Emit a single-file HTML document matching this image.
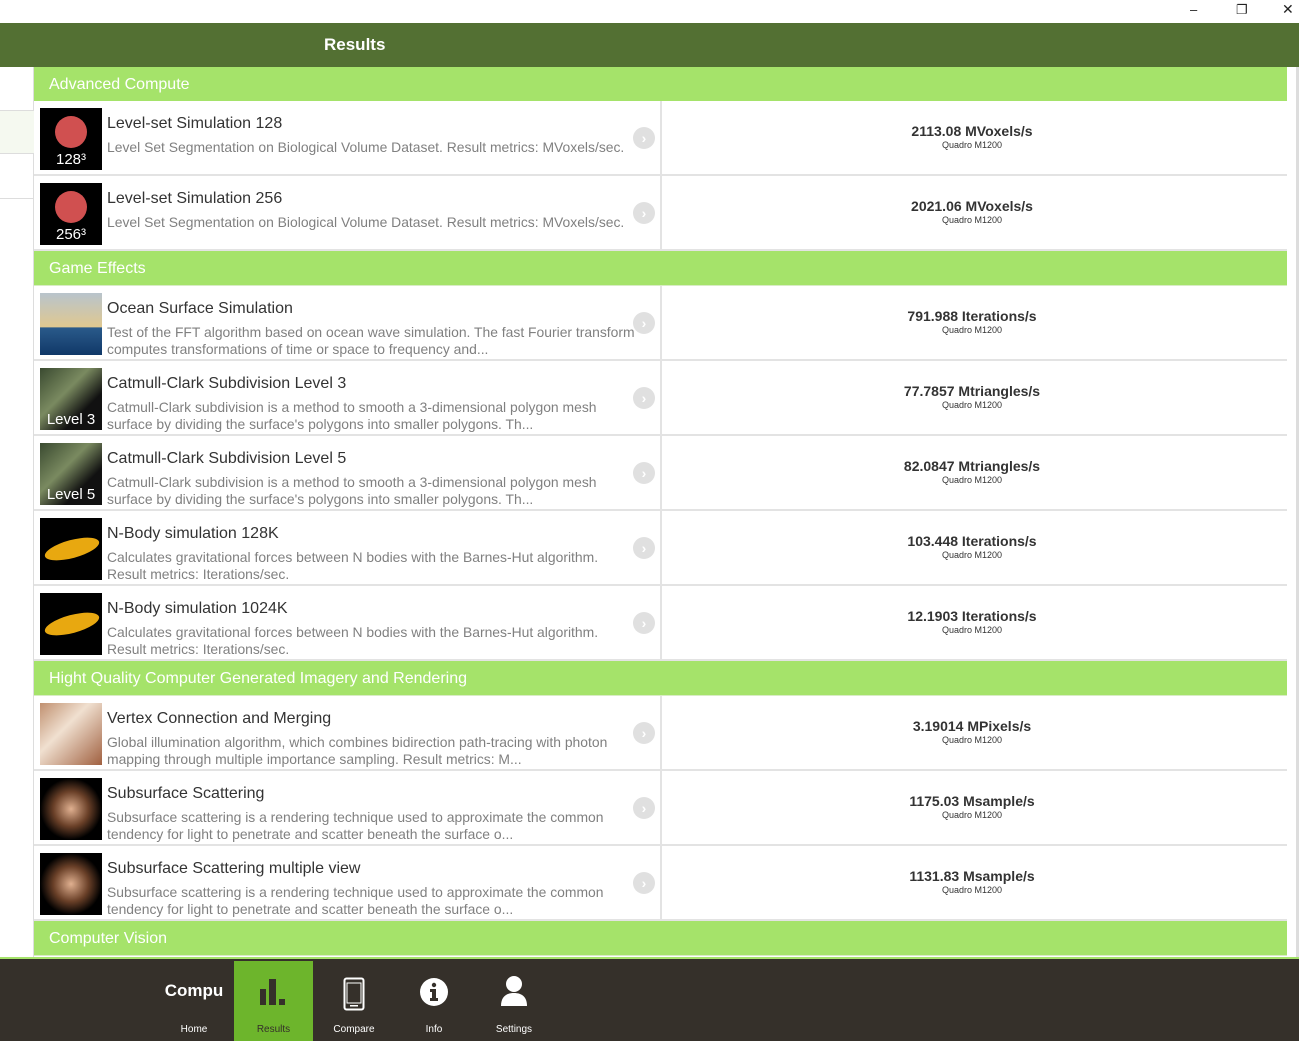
<!DOCTYPE html>
<html><head><meta charset="utf-8"><style>
*{margin:0;padding:0;box-sizing:border-box}
body{width:1299px;height:1041px;overflow:hidden;background:#fff;font-family:"Liberation Sans",sans-serif;position:relative}
.abs{position:absolute}
.hdr{left:0;top:23px;width:1299px;height:44px;background:#537033;color:#fff;font-weight:bold;font-size:17px;line-height:44px}
.sec{left:34px;width:1253px;height:35px;background:#a5e36a;color:#fff;font-size:16px;line-height:35px;padding-left:15px;border-bottom:1px solid #d8ecc4}
.row{left:34px;width:1253px;height:75px;background:#fff;border-bottom:2px solid #e3e3e3}
.th{position:absolute;left:6px;top:7px;width:62px;height:62px;background:#000;overflow:hidden}
.th span{position:absolute;left:0;right:0;bottom:2px;text-align:center;color:#fff;font-size:15px}
.t{position:absolute;left:73px;top:14px;font-size:16px;color:#333;white-space:nowrap}
.d{position:absolute;left:73px;top:38px;font-size:13.9px;line-height:17px;color:#808080;white-space:nowrap}
.ch{position:absolute;left:599px;top:26px;width:22px;height:22px;border-radius:50%;background:#e0e0e0;color:#fff;font-size:14px;font-weight:bold;text-align:center;line-height:22px}
.vl{position:absolute;left:626px;top:0;width:2px;height:75px;background:#e3e3e3}
.v{position:absolute;left:628px;width:620px;top:22px;text-align:center;color:#333}
.v b{display:block;font-size:14px}
.v i{display:block;font-style:normal;font-size:9px;margin-top:1px}
.bar{left:0;top:957px;width:1299px;height:84px;background:#35302a;border-top:2px solid #a5e36a}
.tab{position:absolute;top:2px;width:80px;height:80px;color:#fff;font-size:10px;text-align:center}
.tab .l{position:absolute;bottom:6px;width:100%}
</style></head><body>
<div class="abs" style="left:1190px;top:2px;font-size:13px;color:#222">–</div>
<div class="abs" style="left:1236px;top:2px;font-size:13px;color:#222">❐</div>
<div class="abs" style="left:1282px;top:1px;font-size:14px;color:#222">✕</div>
<div class="abs hdr"><span style="position:absolute;left:324px">Results</span></div>
<div class="abs" style="left:0;top:67px;width:34px;height:890px;background:#fff;border-right:1px solid #ddd"></div>
<div class="abs" style="left:0;top:110px;width:34px;height:1px;background:#ddd"></div>
<div class="abs" style="left:0;top:111px;width:34px;height:42px;background:#f5f9f0"></div>
<div class="abs" style="left:0;top:153px;width:34px;height:1px;background:#ddd"></div>
<div class="abs" style="left:0;top:198px;width:34px;height:1px;background:#ddd"></div>
<div class="abs" style="left:1296px;top:67px;width:3px;height:890px;background:#ddd"></div>

<div class="abs sec" style="top:67px">Advanced Compute</div>
<div class="abs row" style="top:101px"><div class="th"><div style="position:absolute;left:15px;top:8px;width:32px;height:32px;border-radius:50%;background:#d05050"></div><span>128³</span></div><div class="t">Level-set Simulation 128</div><div class="d">Level Set Segmentation on Biological Volume Dataset. Result metrics: MVoxels/sec.</div><div class="ch">›</div><div class="vl"></div><div class="v"><b>2113.08 MVoxels/s</b><i>Quadro M1200</i></div></div>
<div class="abs row" style="top:176px"><div class="th"><div style="position:absolute;left:15px;top:8px;width:32px;height:32px;border-radius:50%;background:#d05050"></div><span>256³</span></div><div class="t">Level-set Simulation 256</div><div class="d">Level Set Segmentation on Biological Volume Dataset. Result metrics: MVoxels/sec.</div><div class="ch">›</div><div class="vl"></div><div class="v"><b>2021.06 MVoxels/s</b><i>Quadro M1200</i></div></div>

<div class="abs sec" style="top:251px">Game Effects</div>
<div class="abs row" style="top:286px"><div class="th" style="background:linear-gradient(#b8c4cc,#e0c890 55%,#2a5a8a 56%,#103868)"></div><div class="t">Ocean Surface Simulation</div><div class="d">Test of the FFT algorithm based on ocean wave simulation. The fast Fourier transform<br>computes transformations of time or space to frequency and...</div><div class="ch">›</div><div class="vl"></div><div class="v"><b>791.988 Iterations/s</b><i>Quadro M1200</i></div></div>
<div class="abs row" style="top:361px"><div class="th" style="background:linear-gradient(135deg,#3a4a30,#7a8a60 40%,#111 70%)"><span>Level 3</span></div><div class="t">Catmull-Clark Subdivision Level 3</div><div class="d">Catmull-Clark subdivision is a method to smooth a 3-dimensional polygon mesh<br>surface by dividing the surface's polygons into smaller polygons. Th...</div><div class="ch">›</div><div class="vl"></div><div class="v"><b>77.7857 Mtriangles/s</b><i>Quadro M1200</i></div></div>
<div class="abs row" style="top:436px"><div class="th" style="background:linear-gradient(135deg,#3a4a30,#7a8a60 40%,#111 70%)"><span>Level 5</span></div><div class="t">Catmull-Clark Subdivision Level 5</div><div class="d">Catmull-Clark subdivision is a method to smooth a 3-dimensional polygon mesh<br>surface by dividing the surface's polygons into smaller polygons. Th...</div><div class="ch">›</div><div class="vl"></div><div class="v"><b>82.0847 Mtriangles/s</b><i>Quadro M1200</i></div></div>
<div class="abs row" style="top:511px"><div class="th"><div style="position:absolute;left:4px;top:22px;width:56px;height:18px;border-radius:50%;background:#e8a810;transform:rotate(-15deg)"></div></div><div class="t">N-Body simulation 128K</div><div class="d">Calculates gravitational forces between N bodies with the Barnes-Hut algorithm.<br>Result metrics: Iterations/sec.</div><div class="ch">›</div><div class="vl"></div><div class="v"><b>103.448 Iterations/s</b><i>Quadro M1200</i></div></div>
<div class="abs row" style="top:586px"><div class="th"><div style="position:absolute;left:4px;top:22px;width:56px;height:18px;border-radius:50%;background:#e8a810;transform:rotate(-15deg)"></div></div><div class="t">N-Body simulation 1024K</div><div class="d">Calculates gravitational forces between N bodies with the Barnes-Hut algorithm.<br>Result metrics: Iterations/sec.</div><div class="ch">›</div><div class="vl"></div><div class="v"><b>12.1903 Iterations/s</b><i>Quadro M1200</i></div></div>

<div class="abs sec" style="top:661px">Hight Quality Computer Generated Imagery and Rendering</div>
<div class="abs row" style="top:696px"><div class="th" style="background:linear-gradient(135deg,#c09070,#f0e0d0 40%,#a06040)"></div><div class="t">Vertex Connection and Merging</div><div class="d">Global illumination algorithm, which combines bidirection path-tracing with photon<br>mapping through multiple importance sampling. Result metrics: M...</div><div class="ch">›</div><div class="vl"></div><div class="v"><b>3.19014 MPixels/s</b><i>Quadro M1200</i></div></div>
<div class="abs row" style="top:771px"><div class="th" style="background:radial-gradient(ellipse at 50% 50%,#e0b090,#6a4028 40%,#000 70%)"></div><div class="t">Subsurface Scattering</div><div class="d">Subsurface scattering is a rendering technique used to approximate the common<br>tendency for light to penetrate and scatter beneath the surface o...</div><div class="ch">›</div><div class="vl"></div><div class="v"><b>1175.03 Msample/s</b><i>Quadro M1200</i></div></div>
<div class="abs row" style="top:846px"><div class="th" style="background:radial-gradient(ellipse at 50% 50%,#e0b090,#6a4028 40%,#000 70%)"></div><div class="t">Subsurface Scattering multiple view</div><div class="d">Subsurface scattering is a rendering technique used to approximate the common<br>tendency for light to penetrate and scatter beneath the surface o...</div><div class="ch">›</div><div class="vl"></div><div class="v"><b>1131.83 Msample/s</b><i>Quadro M1200</i></div></div>
<div class="abs sec" style="top:921px">Computer Vision</div>

<div class="abs bar">
<div class="tab" style="left:154px"><div style="position:absolute;top:20px;width:100%;font-size:17px;font-weight:bold">Compu</div><div class="l">Home</div></div>
<div class="tab" style="left:234px;background:#6db52c;width:79px"><svg class="abs" style="left:25px;top:16px" width="30" height="30"><rect x="1" y="12" width="6" height="16" fill="#35302a"/><rect x="10" y="2" width="7" height="26" fill="#35302a"/><rect x="20" y="22" width="6" height="6" fill="#35302a"/></svg><div class="l" style="color:#35302a">Results</div></div>
<div class="tab" style="left:314px"><svg class="abs" style="left:29px;top:16px" width="22" height="34"><rect x="1.5" y="1.5" width="19" height="31" rx="2" fill="none" stroke="#fff" stroke-width="2"/><rect x="4" y="6" width="14" height="20" fill="none" stroke="#fff" stroke-width="1"/><rect x="7" y="28" width="8" height="1.5" fill="#fff"/></svg><div class="l">Compare</div></div>
<div class="tab" style="left:394px"><svg class="abs" style="left:25px;top:16px" width="30" height="30"><circle cx="15" cy="15" r="14" fill="#fff"/><circle cx="15" cy="8" r="2.2" fill="#35302a"/><path d="M11 12h6v9h2v3h-8v-3h2v-6h-2z" fill="#35302a"/></svg><div class="l">Info</div></div>
<div class="tab" style="left:474px"><svg class="abs" style="left:26px;top:14px" width="28" height="32"><circle cx="14" cy="9" r="8" fill="#fff"/><path d="M1 31c0-9 5-13 13-13s13 4 13 13z" fill="#fff"/></svg><div class="l">Settings</div></div>
</div>
</body></html>
